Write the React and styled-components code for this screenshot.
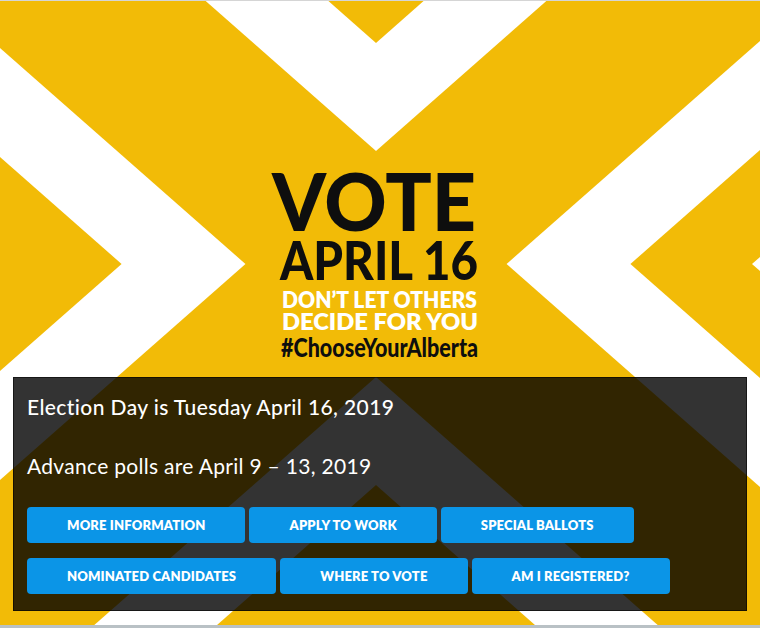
import React from "react";
import styled, { createGlobalStyle } from "styled-components";

const GlobalStyle = createGlobalStyle`
  html, body {
    margin: 0;
    padding: 0;
    background: #b9c1c5;
  }
  body {
    font-family: "Lato", "Open Sans", sans-serif;
  }
`;

const YELLOW = "#f2bb07";
const SLOPE = 0.88;
// stripes of the top-left quarter, as y = SLOPE * x + c ranges
const STRIPES = [
  [-288, -180],
  [48, 157],
  [264, 372],
];

const stripePoints = ([c1, c2]) => {
  const x0 = -160;
  const x1 = 376;
  return [
    [x0, SLOPE * x0 + c1],
    [x1, SLOPE * x1 + c1],
    [x1, SLOPE * x1 + c2],
    [x0, SLOPE * x0 + c2],
  ]
    .map((p) => p.join(","))
    .join(" ");
};

// lettering of the poster: x, baseline, size, width, colour
const LETTERING = [
  { text: "VOTE", x: 272, y: 231, size: 80, width: 204, fill: "#0e0e0e", weight: 900 },
  { text: "APRIL 16", x: 280, y: 280, size: 53, width: 198, fill: "#0e0e0e", weight: 900 },
  { text: "DON’T LET OTHERS", x: 282, y: 308, size: 22, width: 195, fill: "#fff", weight: 800 },
  { text: "DECIDE FOR YOU", x: 282, y: 330, size: 22, width: 196, fill: "#fff", weight: 800 },
  { text: "#ChooseYourAlberta", x: 281, y: 357, size: 26, width: 197, fill: "#0e0e0e", weight: 900 },
];

const buttons = [
  "More information",
  "Apply to work",
  "Special ballots",
  "Nominated candidates",
  "Where to vote",
  "Am I registered?",
];

function Artwork() {
  return (
    <Art width="760" height="625" viewBox="0 1 760 625">
      <defs>
        <clipPath id="quarter">
          <rect x="-160" y="-160" width="536" height="424" />
        </clipPath>
        <g id="stripes" clipPath="url(#quarter)">
          {STRIPES.map((s, i) => (
            <polygon key={i} points={stripePoints(s)} fill="#fff" />
          ))}
        </g>
      </defs>
      <rect x="0" y="0" width="760" height="630" fill={YELLOW} />
      <use href="#stripes" />
      <use href="#stripes" transform="translate(752 0) scale(-1 1)" />
      <use href="#stripes" transform="translate(0 528) scale(1 -1)" />
      <use href="#stripes" transform="translate(752 528) scale(-1 -1)" />

      <text fontFamily="Lato, 'DejaVu Sans', sans-serif">
        {LETTERING.map((l) => (
          <tspan
            key={l.text}
            x={l.x}
            y={l.y}
            fontSize={l.size}
            fontWeight={l.weight}
            fill={l.fill}
            textLength={l.width}
            lengthAdjust="spacingAndGlyphs"
          >
            {l.text}
          </tspan>
        ))}
      </text>
    </Art>
  );
}

export default function App() {
  return (
    <>
      <GlobalStyle />
      <Banner>
        <Artwork />
        <Panel>
          <Headline>Election Day is Tuesday April 16, 2019</Headline>
          <Subline>Advance polls are April 9 – 13, 2019</Subline>
          <ButtonRow>
            {buttons.map((label) => (
              <ActionButton key={label} href="#">
                {label}
              </ActionButton>
            ))}
          </ButtonRow>
        </Panel>
      </Banner>
    </>
  );
}

const Banner = styled.section`
  position: relative;
  width: 760px;
  height: 625px;
  box-sizing: border-box;
  border-top: 1px solid #d5d5d5;
  background: ${YELLOW};
  overflow: hidden;
  display: flex;
  flex-direction: column;
  justify-content: flex-end;
  padding: 0 13px 14px;
`;

const Art = styled.svg`
  position: absolute;
  left: 0;
  top: 0;
  display: block;
`;

const Panel = styled.div`
  position: relative;
  background: rgba(0, 0, 0, 0.8);
  border: 1px solid rgba(0, 0, 0, 0.55);
  padding: 16px 13px 16px;
  color: #fff;
`;

const Headline = styled.h2`
  margin: 0 0 34px;
  font-size: 21px;
  line-height: 1.2;
  font-weight: 500;
  letter-spacing: 0.4px;
`;

const Subline = styled.p`
  margin: 0 0 29px;
  font-size: 21px;
  line-height: 1.2;
  font-weight: 400;
  letter-spacing: 0.3px;
`;

const ButtonRow = styled.div`
  display: flex;
  flex-wrap: wrap;
  gap: 15px 4px;
`;

const ActionButton = styled.a`
  display: flex;
  align-items: center;
  justify-content: center;
  height: 36px;
  padding: 0 40px;
  border-radius: 4px;
  background: #0b95e7;
  color: #fff;
  font-size: 13px;
  font-weight: 800;
  letter-spacing: 0.15px;
  text-transform: uppercase;
  text-decoration: none;
  white-space: nowrap;
`;
